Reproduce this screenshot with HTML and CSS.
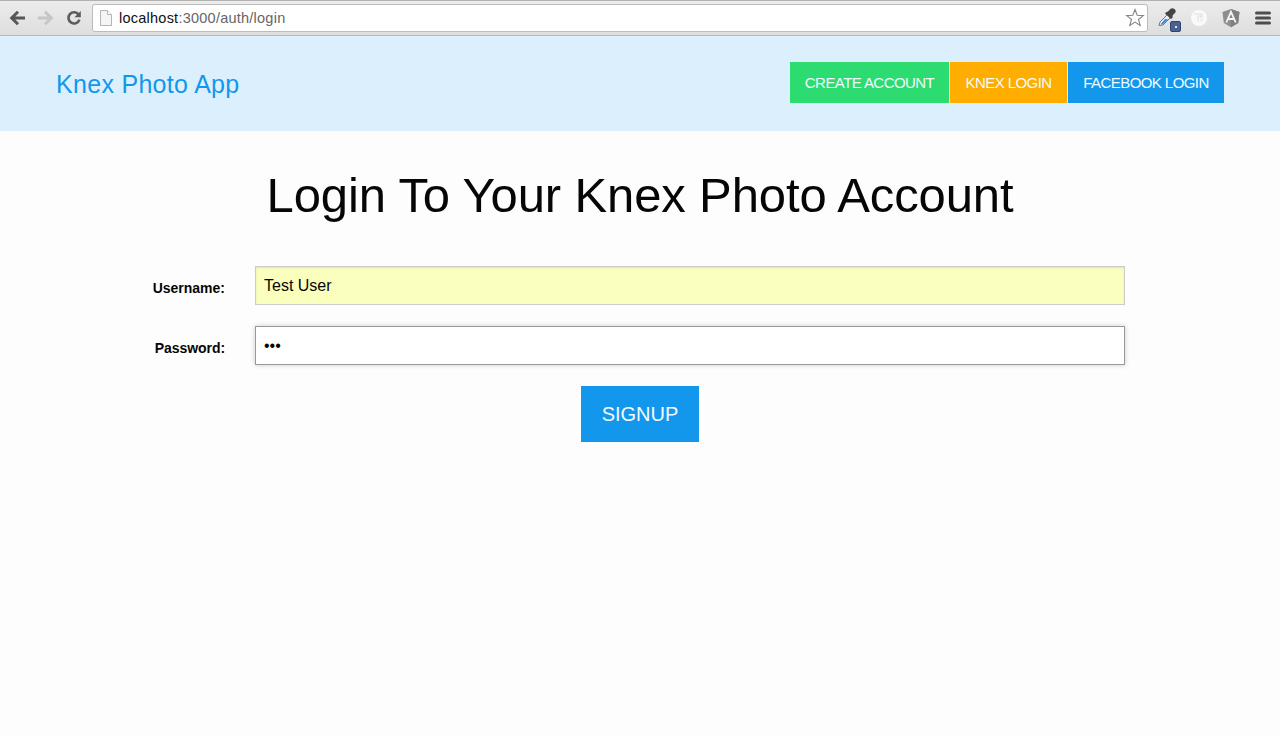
FILE: index.html
```html
<!DOCTYPE html>
<html lang="en">
<head>
<meta charset="utf-8">
<title>Knex Photo App</title>
<link rel="stylesheet" href="styles.css">
</head>
<body>
<div class="window">
  <div class="toolbar">
    <svg class="nav-icons" width="92" height="35" viewBox="0 0 92 35" fill="none">
      <path d="M25 18H12M18 11.7 11.7 18 18 24.3" stroke="#575757" stroke-width="3"/>
      <path d="M38 18H51M45 11.7 51.3 18 45 24.3" stroke="#c6c6c6" stroke-width="3"/>
      <path d="M78.6 14.6A5.6 5.6 0 1 0 79.4 19.6" stroke="#5c5c5c" stroke-width="2.6"/>
      <path d="M80.8 11V17.2H74.4Z" fill="#5c5c5c"/>
    </svg>
    <div class="address">
      <svg width="14" height="18" viewBox="0 0 14 18">
        <path d="M1.5 1.5H8.5L12.5 5.5V16.5H1.5Z" fill="#f5f5f5" stroke="#b4b4b4"/>
        <path d="M8.5 1.5V5.5H12.5" fill="#fff" stroke="#b4b4b4"/>
      </svg>
      <div class="url"><span class="host">localhost</span>:3000/auth/login</div>
      <svg class="star" width="20" height="20" viewBox="0 0 20 20">
        <path d="M10 1.5 12.2 7.3 18.3 7.6 13.5 11.5 15.2 17.5 10 14.1 4.8 17.5 6.5 11.5 1.7 7.6 7.8 7.3Z" fill="#fff" stroke="#858585" stroke-width="1.1"/>
      </svg>
    </div>
    <svg class="extensions" width="132" height="35" viewBox="0 0 132 35">
      <path d="M11 25.5 12 22 20 14 23 17 15 25Z" fill="#e8f0fa" stroke="#777" stroke-width="1"/>
      <path d="M12.5 24.5 17 19 20 19.2 15 24.3Z" fill="#3c82e8"/>
      <path d="M18 12.2 20 11.5 22.3 9Q24.5 7.2 26.7 9.3T26.5 13.5L24.7 15.2 24.5 18 22.8 19 17 13.4Z" fill="#454545"/>
      <rect x="22.5" y="21.5" width="10" height="10" rx="1.5" fill="#49618f" stroke="#2f466f"/>
      <rect x="27" y="26" width="2" height="2" fill="#dce5f5"/>
      <circle cx="51" cy="18" r="8" fill="#f9f9f9"/>
      <path d="M46 14H54V16H50V22M52 17H55M52 20H55" fill="none" stroke="#dedede"/>
      <path d="M83 9 91.5 12 90.2 23 83 27.2 75.8 23 74.5 12Z" fill="#8e8e8e"/>
      <path d="M83 9 91.5 12 90.2 23 83 27.2Z" fill="#808080"/>
      <path d="M78.3 22.5 83 11.8 87.7 22.5M80 19H86" fill="none" stroke="#f4f4f4" stroke-width="1.8"/>
      <path d="M108.5 13H121.5M108.5 18H121.5M108.5 23H121.5" stroke="#4d4d4d" stroke-width="3" stroke-linecap="round"/>
    </svg>
  </div>
  <header class="header">
    <a class="brand">Knex Photo App</a>
    <nav class="actions">
      <a class="action create">CREATE ACCOUNT</a>
      <a class="action knex">KNEX LOGIN</a>
      <a class="action facebook">FACEBOOK LOGIN</a>
    </nav>
  </header>
  <main class="main">
    <h1 class="title">Login To Your Knex Photo Account</h1>
    <form class="form">
      <div class="row">
        <label class="label user-label" for="username">Username:</label>
        <input class="field filled" id="username" type="text" value="Test User">
      </div>
      <div class="row">
        <label class="label pass-label" for="password">Password:</label>
        <input class="field active" id="password" type="text" value="•••">
      </div>
      <button class="submit" type="button">SIGNUP</button>
    </form>
  </main>
</div>
</body>
</html>
```
FILE: styles.css
```css
* { box-sizing: border-box; }
body {
  margin: 0;
  background: #fdfdfd;
  color: #060606;
  font-family: "Liberation Sans", Arial, sans-serif;
}
.window { height: 736px; overflow: hidden; }
.toolbar {
  display: flex;
  height: 36px;
  border-top: 1px solid #b2b2b2;
  border-bottom: 1px solid #b9b9b9;
  background: linear-gradient(#ececec, #dedede);
}
.nav-icons, .extensions { flex: none; margin-top: -1px; }
.address {
  display: flex;
  align-items: center;
  flex: 1;
  height: 28px;
  margin-top: 3px;
  padding: 0 2px 0 6px;
  border: 1px solid #bcbcbc;
  border-radius: 3px;
  background: #fff;
}
.url {
  flex: 1;
  margin-left: 6px;
  color: #666;
  font-size: 14.5px;
  letter-spacing: 0.24px;
}
.host { color: #111; }
.header {
  display: flex;
  justify-content: space-between;
  height: 95px;
  padding: 26px 56px 0;
  background: #dceffd;
}
.brand {
  margin-top: 8px;
  color: #1397ec;
  font-size: 25px;
  line-height: 29px;
  letter-spacing: 0.3px;
}
.actions { display: flex; gap: 1px; height: 41px; }
.action {
  color: #f1fbff;
  font-size: 15px;
  line-height: 41px;
  letter-spacing: -0.57px;
  text-align: center;
  white-space: nowrap;
}
.create { width: 159px; background: #2ddc70; }
.knex { width: 117px; background: #ffae00; }
.facebook { width: 156px; background: #1397ec; }
.title {
  margin: 36px 0 0;
  font-size: 49px;
  font-weight: 400;
  line-height: 56px;
  letter-spacing: -0.13px;
  text-align: center;
  white-space: nowrap;
}
.form {
  display: flex;
  flex-direction: column;
  align-items: center;
  gap: 21px;
  margin-top: 43px;
}
.row {
  display: flex;
  align-self: flex-start;
  gap: 30px;
  width: 1125px;
  height: 39px;
}
.label {
  width: 225px;
  padding-top: 3px;
  font-size: 14px;
  font-weight: 700;
  line-height: 39px;
  text-align: right;
}
.pass-label { letter-spacing: -0.05px; }
.field {
  width: 870px;
  height: 39px;
  padding: 0 8px;
  border: 1px solid #ccc;
  outline: 0;
  color: #060606;
  font: 16px "Liberation Sans", Arial, sans-serif;
}
.filled { background: #faffbd; box-shadow: inset 0 1px 2px rgba(0, 0, 0, 0.1); }
.active { border-color: #999; background: #fff; box-shadow: 0 0 5px #ccc; }
.submit {
  width: 118px;
  height: 56px;
  padding: 0;
  border: 0;
  background: #1397ec;
  color: #f1fbff;
  font: 20px "Liberation Sans", Arial, sans-serif;
}
```
